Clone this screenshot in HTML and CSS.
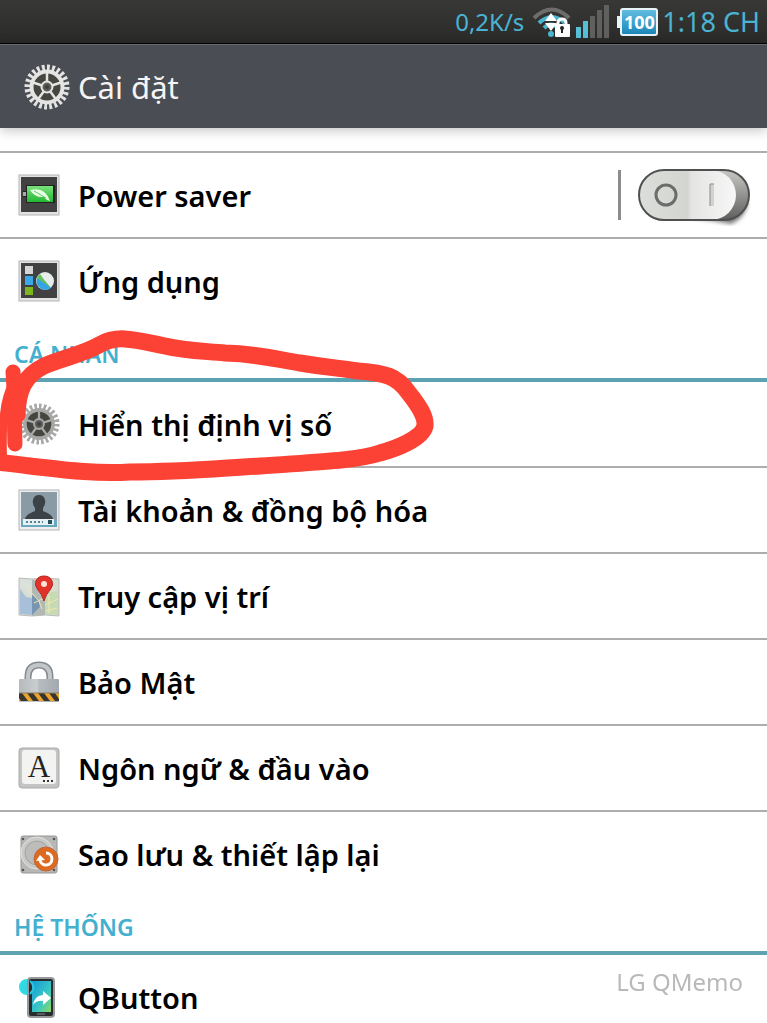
FILE: index.html
```html
<!DOCTYPE html>
<html lang="vi">
<head>
    <meta charset="UTF-8">
    <meta name="viewport" content="width=device-width, initial-scale=1.0">
    <title>Cài đặt</title>
    <link rel="stylesheet" href="styles.css">
</head>
<body>
    <!-- Shared gradients and the gear symbol -->
    <svg class="defs" aria-hidden="true">
        <defs>
            <linearGradient id="green" x1="0" y1="0" x2="0" y2="1">
                <stop offset="0" stop-color="#7be27c"/><stop offset="1" stop-color="#22b832"/>
            </linearGradient>
            <linearGradient id="steel" x1="0" y1="0" x2="1" y2="0">
                <stop offset="0" stop-color="#b5babd"/><stop offset=".45" stop-color="#c9cdcf"/><stop offset=".5" stop-color="#b6bcc0"/><stop offset="1" stop-color="#a3a9ae"/>
            </linearGradient>
            <radialGradient id="hub">
                <stop offset="0" stop-color="#333"/><stop offset="1" stop-color="#777"/>
            </radialGradient>
        </defs>
        <symbol id="gear" viewBox="0 0 46 46">
            <circle cx="23" cy="23" r="19.5" fill="none" stroke="currentColor" stroke-width="6" pathLength="48" stroke-dasharray="1.1 .9"/>
            <circle cx="23" cy="23" r="15.5" fill="#44463f" stroke="currentColor" stroke-width="4"/>
            <g stroke="currentColor" stroke-width="2.5">
                <path d="M23 23V9M23 23l13.3-4.3M23 23l8.2 11.3M23 23l-8.2 11.3M23 23L9.7 18.7"/>
            </g>
            <circle cx="23" cy="23" r="5.5" fill="url(#hub)" stroke="currentColor" stroke-width="2"/>
        </symbol>
    </svg>

    <!-- Status bar -->
    <div class="status-bar">
        <span class="speed">0,2K/s</span>
        <svg class="wifi" width="40" height="32" viewBox="0 0 40 32" aria-hidden="true">
            <path d="M2 12Q20-5 37 12" fill="none" stroke="#6d6d6b" stroke-width="4"/>
            <path d="M7 17Q20 5 33 17" fill="none" stroke="#4bb5cf" stroke-width="4"/>
            <path d="M12 22Q19 15 26 22" fill="none" stroke="#4bb5cf" stroke-width="4"/>
            <circle cx="19" cy="28" r="3" fill="#4bb5cf"/>
            <path d="M19 7l6 8H13zM13 17h12l-6 8z" fill="#fff"/>
            <path d="M26 20v-3q0-4 4-4t4 4v3" fill="none" stroke="#fff" stroke-width="3"/>
            <rect x="23" y="18" width="15" height="13" rx="1" fill="#fff"/>
            <path d="M30 22v5" stroke="#222" stroke-width="2"/>
            <circle cx="30" cy="22" r="2" fill="#222"/>
        </svg>
        <svg class="signal" width="34" height="33" viewBox="0 0 34 33" aria-hidden="true">
            <path d="M0 22h5v11H0zM7 16h5v17H7z" fill="#57bfd6"/>
            <path d="M14 11h5v22h-5zM21 5h5v28h-5zM28 0h5v33h-5z" fill="#60605e"/>
        </svg>
        <span class="battery">100</span>
        <span class="clock">1:18 CH</span>
    </div>

    <!-- Title bar -->
    <header class="title-bar">
        <svg class="title-gear" width="46" height="46" aria-hidden="true"><use href="#gear"/></svg>
        <h1>Cài đặt</h1>
    </header>

    <main class="settings">
        <div class="row row-cut"></div>
        <div class="row">
            <a href="#" class="row-link">
                <svg class="icon" viewBox="0 0 42 42" aria-hidden="true">
                    <rect x="1" y="1" width="40" height="40" fill="#e2e2e2" stroke="#b4b4b4"/>
                    <rect x="3" y="3" width="36" height="35" fill="#414141"/>
                    <path d="M5 17h3v-6h29v18H8v-6H5z" fill="#222"/>
                    <path d="M5 18h3v4H5z" fill="#aaa"/>
                    <rect x="9" y="12" width="26" height="16" fill="url(#green)"/>
                    <path d="M12 16q15-4 20 11-4-1-6-4-9 1-14-7z" fill="#e9ffe3"/>
                    <path d="M16 17l12 7" stroke="#5cd05f"/>
                </svg>
                <span>Power saver</span>
            </a>
            <label class="switch">
                <input type="checkbox" aria-label="Power saver">
                <svg viewBox="0 0 114 62" width="114" height="62" aria-hidden="true">
                    <defs>
                        <linearGradient id="well" x1="0" y1="0" x2="0" y2="1"><stop offset="0" stop-color="#c8c9c5"/><stop offset="1" stop-color="#5e5f5d"/></linearGradient>
                        <linearGradient id="knob" x1="0" y1="0" x2="1" y2="0"><stop offset="0" stop-color="#dcdedb"/><stop offset=".5" stop-color="#d3d5d1"/><stop offset=".54" stop-color="#e4e5e3"/><stop offset="1" stop-color="#f7f7f7"/></linearGradient>
                        <filter id="soft"><feGaussianBlur stdDeviation="2"/></filter>
                    </defs>
                    <path d="M50 53Q80 57 94 60 108 54 111 38L86 50z" fill="#777" filter="url(#soft)"/>
                    <rect x="2" y="6" width="110" height="50" rx="25" fill="url(#well)"/>
                    <rect x="2" y="6" width="97" height="50" rx="25" fill="url(#knob)"/>
                    <rect x="2" y="6" width="110" height="50" rx="25" fill="none" stroke="#4f504f" stroke-width="2"/>
                    <circle cx="29" cy="31" r="10" fill="none" stroke="#6c6d6a" stroke-width="3"/>
                    <path d="M73 20h4v22h-4z" fill="#d2d2d0"/>
                    <path d="M73 42V20h4" fill="none" stroke="#8c8c8a"/>
                </svg>
            </label>
        </div>
        <a href="#" class="row row-last">
            <svg class="icon" viewBox="0 0 42 42" aria-hidden="true">
                <rect x="1" y="1" width="40" height="40" fill="#e2e2e2" stroke="#b4b4b4"/>
                <rect x="3" y="3" width="36" height="35" fill="#414141"/>
                <rect x="7" y="6" width="8" height="8" fill="#d4d5d5"/>
                <rect x="7" y="16" width="8" height="9" fill="#3ba9e8"/>
                <rect x="7" y="27" width="8" height="8" fill="#7db51c"/>
                <circle cx="27" cy="21" r="9" fill="#e8eced"/>
                <path d="M27 21l6 7a9 9 0 0 1-14-10z" fill="#34a5e4"/>
                <path d="M19 18a9 9 0 0 1 3-4l5 7 6 7z" fill="#65c05b"/>
            </svg>
            <span>Ứng dụng</span>
        </a>

        <section class="personal">
            <h2>CÁ NHÂN</h2>
            <a href="#" class="row">
                <svg class="icon icon-gear" aria-hidden="true"><use href="#gear"/></svg>
                <span>Hiển thị định vị số</span>
            </a>
            <a href="#" class="row">
                <svg class="icon" viewBox="0 0 42 42" aria-hidden="true">
                    <rect x="1" y="1" width="40" height="40" fill="#eceeef" stroke="#b4b4b4"/>
                    <rect x="3" y="3" width="36" height="35" fill="#8b9ba5"/>
                    <path d="M3 31h36v7H3z" fill="#68a8ba"/>
                    <path d="M7 30q1-5 10-8v-3q-3-4-2-8 1-5 6-5t6 5q1 4-2 8v3q9 3 10 8z" fill="#3b4347"/>
                    <rect x="5" y="30" width="31" height="6" fill="#e5f1f4"/>
                    <path d="M8 33h17" stroke="#55808c" stroke-width="2" stroke-dasharray="2 2"/>
                    <rect x="30" y="31" width="4" height="4" fill="#28515e"/>
                </svg>
                <span>Tài khoản &amp; đồng bộ hóa</span>
            </a>
            <a href="#" class="row">
                <svg class="icon" viewBox="0 0 42 42" aria-hidden="true">
                    <path d="M1 3l13 1 13-1 14 1v37l-14-1-13 1-13-1z" fill="#d8ddd0" stroke="#bbb"/>
                    <path d="M2 14l6 8 6 1v17L2 39z" fill="#a8bfd9"/>
                    <path d="M2 4l12 1v17l-7-7-5-2z" fill="#d9e1df"/>
                    <path d="M14 5l13-1v36l-13 1z" fill="#b2b9b5"/>
                    <path d="M14 20l6 4 2 8-8 8z" fill="#7896b4"/>
                    <path d="M27 18l13-2v24l-13-1z" fill="#c6dbb3"/>
                    <path d="M8 8l4 8 9 10 3 8M27 30l13-6M31 20v18M16 28l10-5M28 36l11-3" fill="none" stroke="#f1e7ad"/>
                    <path d="M26 26q-2-7-6-11-4-5-2-9 2-5 8-5t8 5q2 4-2 9-4 4-6 11z" fill="#e23229" stroke="#b8231e"/>
                    <circle cx="26" cy="9" r="3" fill="#ffe2d5"/>
                </svg>
                <span>Truy cập vị trí</span>
            </a>
            <a href="#" class="row">
                <svg class="icon" viewBox="0 0 42 42" aria-hidden="true">
                    <path d="M10 19v-3Q10 4 21 4t11 12v3" fill="none" stroke="#85898d" stroke-width="7"/>
                    <path d="M10 19v-3Q10 4 21 4t11 12v3" fill="none" stroke="#c2c6c9" stroke-width="4"/>
                    <rect x="1" y="18" width="40" height="23" rx="1" fill="url(#steel)"/>
                    <path d="M1 32h40v8H1z" fill="#e9a530"/>
                    <path d="M1 32h3l6 8H3l-2-3zM9 32h6l6 8h-6zM20 32h6l6 8h-6zM31 32h6l4 6v2h-4z" fill="#39342c"/>
                    <path d="M1 32h40" stroke="#8b7c61"/>
                </svg>
                <span>Bảo Mật</span>
            </a>
            <a href="#" class="row">
                <svg class="icon" viewBox="0 0 42 42" aria-hidden="true">
                    <rect x="1" y="1" width="40" height="40" rx="3" fill="#c4c4c4" stroke="#aaa"/>
                    <rect x="4" y="3" width="34" height="34" rx="3" fill="#f3f3f2"/>
                    <text x="21" y="30" class="key-letter">A</text>
                    <path d="M25 34h11" stroke="#333" stroke-width="2" stroke-dasharray="2 2"/>
                </svg>
                <span>Ngôn ngữ &amp; đầu vào</span>
            </a>
            <a href="#" class="row row-last">
                <svg class="icon" viewBox="0 0 42 42" aria-hidden="true">
                    <rect x="3" y="3" width="36" height="37" rx="2" fill="#b7b7b6" stroke="#969694"/>
                    <circle cx="19" cy="20" r="16" fill="#c9c9c8" stroke="#e3e3e2"/>
                    <circle cx="19" cy="20" r="12" fill="#bcbcbb" stroke="#a3a3a2"/>
                    <g fill="#555"><circle cx="5" cy="6" r="1.3"/><circle cx="36" cy="6" r="1.3"/><circle cx="5" cy="37" r="1.3"/><circle cx="36" cy="37" r="1.3"/></g>
                    <circle cx="28" cy="26" r="12" fill="#dc6a20" stroke="#c1683a"/>
                    <path d="M28 20a6 6 0 1 1-6 7" fill="none" stroke="#fff" stroke-width="3"/>
                    <path d="M18 28l4-6 5 5z" fill="#fff"/>
                </svg>
                <span>Sao lưu &amp; thiết lập lại</span>
            </a>

            <!-- Red pen circle around the first item -->
            <svg class="ink" width="440" height="160" viewBox="0 0 440 160" aria-hidden="true">
                <path d="M17 90C18 65 24 51 44 41 62 33 84 29 99 20 118 9 136 15 165 21 185 26 205 26 225 28 260 29 280 35 300 38 330 43 340 43 358 46 385 48 397 51 408 67 420 82 426 92 425 101 422 114 395 124 380 128 355 136 315 137 260 141 210 144 180 147 130 147 95 149 65 145 30 141 15 139 5 138-3 137"/>
                <path class="ink-thick" d="M13 47C15 70 14 95 15 119"/>
                <path class="ink-thin" d="M12 60C4 75 2 95 3 135"/>
            </svg>
        </section>

        <section>
            <h2>HỆ THỐNG</h2>
            <a href="#" class="row">
                <svg class="icon" viewBox="0 0 42 42" aria-hidden="true">
                    <defs><linearGradient id="screen" x1="0" y1="0" x2="1" y2="1"><stop offset="0" stop-color="#159bd8"/><stop offset=".6" stop-color="#3ac8c4"/><stop offset="1" stop-color="#8ed862"/></linearGradient></defs>
                    <circle cx="9" cy="11" r="6" fill="#35d5e4" stroke="#2ddbe8" stroke-width="4"/>
                    <rect x="10" y="2" width="26" height="39" rx="3" fill="#282d30" stroke="#97999b" stroke-width="2"/>
                    <rect x="14" y="5" width="19" height="31" fill="url(#screen)"/>
                    <path d="M12 5q7 6 0 13" fill="none" stroke="#29c6df" stroke-width="2"/>
                    <path d="M15 29q2-10 10-10v-4l8 7-8 7v-4q-6-1-10 4z" fill="#fff"/>
                    <path d="M19 38h8" stroke="#888"/>
                </svg>
                <span>QButton</span>
            </a>
        </section>
    </main>

    <div class="memo-mark">LG QMemo</div>
</body>
</html>
```
FILE: styles.css
```css
* {
    box-sizing: border-box;
}

body {
    height: 100vh;
    margin: 0;
    display: flex;
    flex-direction: column;
    overflow: hidden;
    background-color: #fff;
    color: #000;
    font-family: "Noto Sans", "Open Sans", sans-serif;
}

.defs {
    position: absolute;
    width: 0;
    height: 0;
}

/* Status bar */
.status-bar {
    flex: none;
    height: 44px;
    padding-right: 7px;
    display: flex;
    align-items: center;
    justify-content: flex-end;
    background: linear-gradient(#383836, #2a2b29);
    border-bottom: 1px solid #000;
    color: #4ab3d3;
    white-space: nowrap;
}

.speed {
    margin-right: 8px;
    font-size: 24px;
}

.wifi {
    margin-right: 4px;
}

.signal {
    margin-right: 10px;
}

.battery {
    position: relative;
    width: 38px;
    height: 28px;
    margin-right: 4px;
    border: 2px solid #e8f4f8;
    border-radius: 3px;
    background: linear-gradient(#63bce0, #1c86b8);
    color: #fff;
    font-size: 18px;
    font-weight: 700;
    line-height: 24px;
    display: flex;
    justify-content: center;
}

.battery::before {
    content: "";
    position: absolute;
    top: 6px;
    left: -5px;
    width: 4px;
    height: 12px;
    background-color: #e8f4f8;
}

.clock {
    font-size: 27px;
}

/* Title bar */
.title-bar {
    flex: none;
    position: relative;
    z-index: 1;
    height: 84px;
    padding: 0 24px;
    display: flex;
    align-items: center;
    gap: 8px;
    background-color: #4a4d53;
    border-top: 1px solid #6a6d70;
    box-shadow: 0 2px 12px rgba(0, 0, 0, 0.25);
    color: #f4f4f4;
}

.title-gear {
    color: #e4e4e2;
}

h1 {
    margin: 0;
    font-size: 31px;
    font-weight: 400;
    line-height: 40px;
}

/* Settings list */
.settings {
    flex: 1;
    min-height: 0;
    overflow-y: auto;
    scrollbar-width: none;
}

.row {
    height: 86px;
    padding: 0 18px;
    display: flex;
    align-items: center;
    border-bottom: 2px solid #adadad;
}

.row-cut {
    height: 25px;
}

.row-last {
    border-bottom-color: transparent;
}

.row,
.row-link {
    gap: 18px;
    color: #000;
    font-size: 29px;
    font-weight: 600;
    text-decoration: none;
    white-space: nowrap;
}

.row-link {
    flex: 1;
    display: flex;
    align-items: center;
}

.icon {
    flex: none;
    width: 42px;
    height: 42px;
}

.icon-gear {
    color: #a8a8a6;
}

.key-letter {
    font-family: "Liberation Serif", serif;
    font-size: 31px;
    font-weight: 400;
    text-anchor: middle;
    fill: #222;
}

h2 {
    height: 57px;
    margin: 0;
    padding: 11px 14px 0;
    border-bottom: 4px solid #5ba3b3;
    color: #43b0cf;
    font-size: 23px;
    font-weight: 600;
    line-height: 36px;
}

/* Toggle */
.switch {
    position: relative;
    height: 50px;
    padding-left: 16px;
    margin-right: -2px;
    display: flex;
    align-items: center;
    border-left: 3px solid #8c8c8c;
}

.switch input {
    position: absolute;
    inset: 0;
    width: 100%;
    height: 100%;
    margin: 0;
    opacity: 0;
    cursor: pointer;
}

/* Pen drawing over the list */
.personal {
    position: relative;
}

.ink {
    position: absolute;
    top: 0;
    left: 0;
    fill: none;
    stroke: #fc4235;
    stroke-width: 17px;
    stroke-linecap: round;
    stroke-linejoin: round;
    pointer-events: none;
}

.ink-thick {
    stroke-width: 15px;
}

.ink-thin {
    stroke-width: 8px;
}

.memo-mark {
    position: fixed;
    right: 24px;
    bottom: 24px;
    color: #b9b9b9;
    font-size: 24px;
    line-height: 34px;
}
```
